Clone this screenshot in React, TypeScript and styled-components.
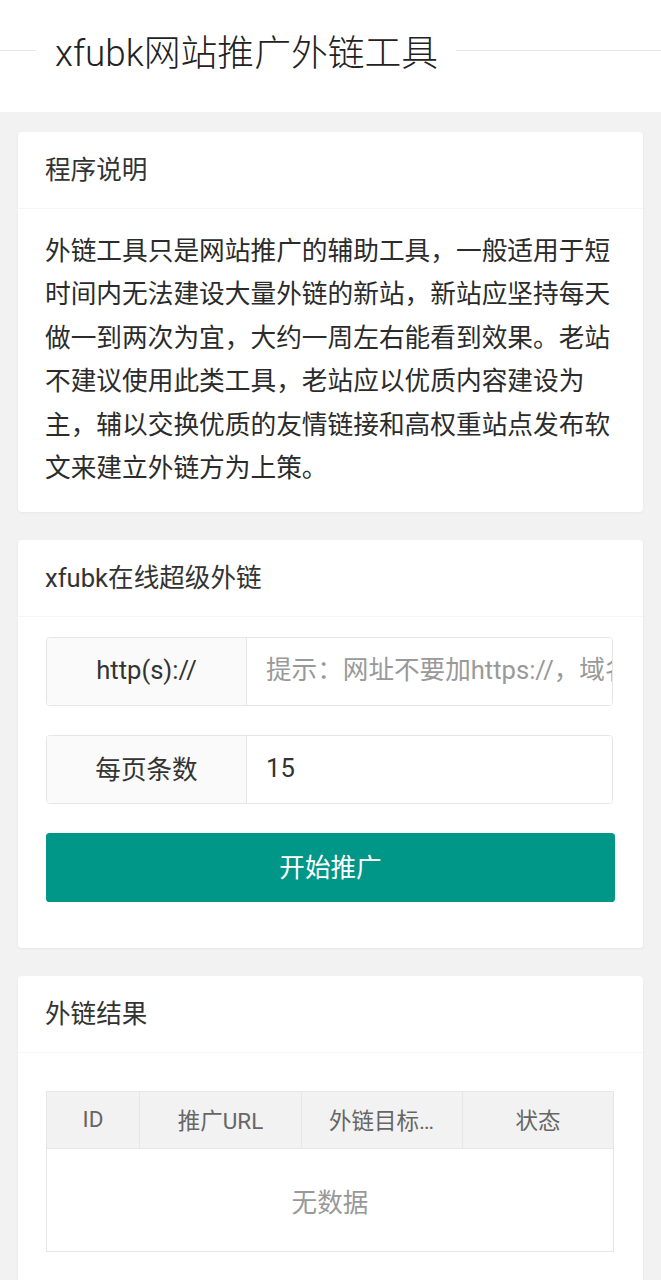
import React from 'react'
import styled, { createGlobalStyle } from 'styled-components'

const GlobalStyle = createGlobalStyle`
  * {
    box-sizing: border-box;
  }
  body {
    margin: 0;
    background: #f2f2f2;
    color: #333;
    font-family: Roboto, 'Noto Sans CJK SC', sans-serif;
  }
`

const Header = styled.header`
  background: #fff;
  height: 112px;
`

const TitleRow = styled.div`
  display: flex;
  align-items: center;
  height: 100px;
`

const Rule = styled.span<{ $grow?: boolean }>`
  height: 1px;
  background: #e6e6e6;
  width: ${(p) => (p.$grow ? 'auto' : '36px')};
  flex: ${(p) => (p.$grow ? '1' : 'none')};
`

const Title = styled.h1`
  margin: 0;
  padding: 8px 18px 0 19px;
  font-size: 36.8px;
  font-weight: 300;
  color: #222;
  line-height: 1.4;
  white-space: nowrap;
`

const Main = styled.main`
  display: flex;
  flex-direction: column;
  gap: 28px;
  padding: 20px 18px 40px;
`

const Card = styled.section`
  background: #fff;
  border-radius: 4px;
  box-shadow: 0 1px 3px rgba(0, 0, 0, 0.05);
`

const CardHeader = styled.div`
  height: 77px;
  line-height: 76px;
  padding: 0 27px;
  border-bottom: 1px solid #f6f6f6;
  font-size: 25.6px;
  color: #333;
`

const Desc = styled.p`
  margin: 0;
  padding: 21px 27px 22px;
  font-size: 25.7px;
  line-height: 43.4px;
  color: #2b2b2b;
`

const FormBody = styled.div`
  display: flex;
  flex-direction: column;
  gap: 29px;
  padding: 20px 27px 46px;
`

const Field = styled.div`
  display: flex;
  height: 69px;
  margin: 0 3px 0 1px;
  border: 1px solid #e6e6e6;
  border-radius: 3.6px;
  overflow: hidden;
`

const Label = styled.label`
  flex: none;
  width: 200px;
  display: flex;
  align-items: center;
  justify-content: center;
  padding-bottom: 4px;
  background: #fafafa;
  border-right: 1px solid #e6e6e6;
  font-size: 25.6px;
  color: #333;
`

const Input = styled.input`
  flex: 1;
  min-width: 0;
  border: none;
  outline: none;
  background: #fff;
  padding: 0 0 3px 19px;
  font-family: inherit;
  font-size: 25.6px;
  color: #333;
  &::placeholder {
    color: #999;
  }
`

const Button = styled.button`
  height: 69px;
  margin: 0 1px;
  padding: 0 0 5px;
  border: none;
  border-radius: 3.6px;
  background: #009688;
  color: #fff;
  font-family: inherit;
  font-size: 25.6px;
  cursor: pointer;
`

const TableBody = styled.div`
  padding: 38px 29px 60px 28px;
`

const Table = styled.div`
  border: 1px solid #e6e6e6;
`

const HeadRow = styled.div`
  display: grid;
  grid-template-columns: 93px 162px 161px 1fr;
  height: 57px;
  background: #f2f2f2;
  border-bottom: 1px solid #e6e6e6;
`

const Th = styled.div`
  display: flex;
  align-items: center;
  justify-content: center;
  padding: 0 0 3px;
  min-width: 0;
  border-right: 1px solid #e6e6e6;
  font-size: 22.5px;
  color: #666;
  &:last-child {
    border-right: none;
  }
`

const ThText = styled.span<{ $clip?: boolean }>`
  max-width: ${(p) => (p.$clip ? '106px' : 'none')};
  overflow: hidden;
  white-space: nowrap;
  text-overflow: ellipsis;
`

const Empty = styled.div`
  height: 102px;
  display: flex;
  align-items: center;
  justify-content: center;
  font-size: 25.6px;
  color: #999;
`

const columns = ['ID', '推广URL', '外链目标地址', '状态']

export default function App() {
  return (
    <>
      <GlobalStyle />
      <Header>
        <TitleRow>
          <Rule />
          <Title>xfubk网站推广外链工具</Title>
          <Rule $grow />
        </TitleRow>
      </Header>
      <Main>
        <Card>
          <CardHeader>程序说明</CardHeader>
          <Desc>
            外链工具只是网站推广的辅助工具，一般适用于短时间内无法建设大量外链的新站，新站应坚持每天做一到两次为宜，大约一周左右能看到效果。老站不建议使用此类工具，老站应以优质内容建设为主，辅以交换优质的友情链接和高权重站点发布软文来建立外链方为上策。
          </Desc>
        </Card>
        <Card>
          <CardHeader>xfubk在线超级外链</CardHeader>
          <FormBody>
            <Field>
              <Label>http(s)://</Label>
              <Input placeholder="提示：网址不要加https://，域名即可" />
            </Field>
            <Field>
              <Label>每页条数</Label>
              <Input defaultValue="15" />
            </Field>
            <Button>开始推广</Button>
          </FormBody>
        </Card>
        <Card>
          <CardHeader>外链结果</CardHeader>
          <TableBody>
            <Table>
              <HeadRow>
                {columns.map((c) => (
                  <Th key={c}>
                    <ThText $clip={c.length > 5}>{c}</ThText>
                  </Th>
                ))}
              </HeadRow>
              <Empty>无数据</Empty>
            </Table>
          </TableBody>
        </Card>
      </Main>
    </>
  )
}
